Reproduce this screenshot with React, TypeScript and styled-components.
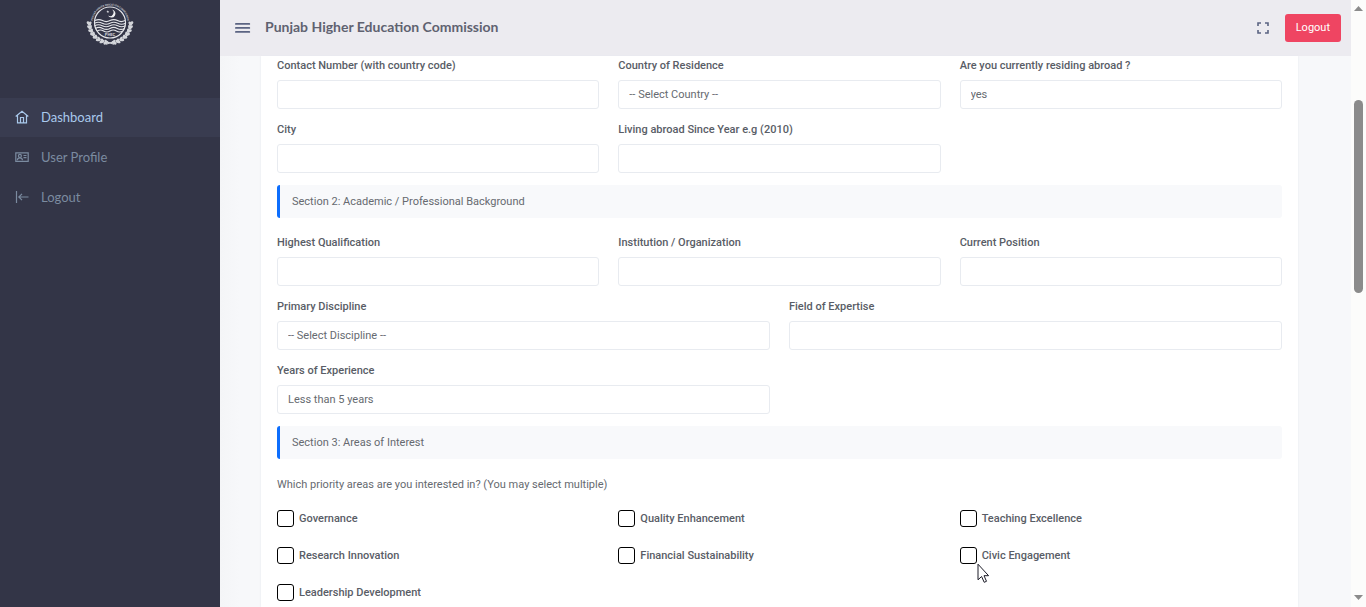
import React, { useId } from "react";
import styled, { createGlobalStyle, css } from "styled-components";

const GlobalStyle = createGlobalStyle`
  *, *::before, *::after { box-sizing: border-box; }
  body {
    margin: 0;
    background: #f7f8fa;
    color: #595d66;
    font-family: Roboto, "Liberation Sans", sans-serif;
    font-size: 11px;
    line-height: 16px;
  }
`;

const Shell = styled.div`
  display: flex;
  height: 100vh;
  overflow: hidden;
`;

const Sidebar = styled.aside`
  flex: 0 0 220px;
  background: #333547;
`;

const Brand = styled.a`
  display: flex;
  justify-content: center;
  height: 98px;
  padding-top: 1px;
`;

const Menu = styled.nav`
  display: flex;
  flex-direction: column;
  gap: 1px;
`;

const MenuLink = styled.a<{ $active?: boolean }>`
  display: flex;
  align-items: center;
  gap: 12px;
  height: 39px;
  padding: 0 15px 2px;
  font-family: Lato, sans-serif;
  font-size: 13px;
  text-decoration: none;
  color: ${(p) => (p.$active ? "#a9c9ec" : "#7b8ba0")};
  background: ${(p) => (p.$active ? "#393c50" : "transparent")};
`;

const Page = styled.div`
  display: flex;
  flex: 1;
  flex-direction: column;
  min-width: 0;
`;

const TopBar = styled.header`
  display: flex;
  flex: 0 0 56px;
  align-items: center;
  padding: 0 10px 0 14px;
  background: #ecebf0;
`;

const IconButton = styled.button`
  display: flex;
  padding: 0;
  border: 0;
  background: none;
  color: #5b6482;
`;

const Title = styled.h1`
  flex: 1;
  margin: 0 0 0 14px;
  padding-bottom: 2px;
  font-family: Lato, sans-serif;
  font-size: 14px;
  font-weight: 700;
  line-height: 20px;
  color: #5f6270;
`;

const LogoutButton = styled.button`
  height: 28px;
  margin-left: 15px;
  padding: 0 11px;
  border: 0;
  border-radius: 3px;
  background: #ef4562;
  color: #fff;
  font: 400 11px/16px Roboto, sans-serif;
`;

const Content = styled.main`
  display: flex;
  flex: 1;
  min-height: 0;
  padding: 0 53px 0 41px;
  background: linear-gradient(to right, #f4f5f7, #f7f8fa 20px);
`;

const Card = styled.form`
  flex: 1;
  padding: 2px 16px 0;
  background: #fff;
  box-shadow: 0 0 2px #e6e9ee;
  overflow: hidden;
`;

const Fields = styled.div`
  display: grid;
  grid-template-columns: repeat(6, 1fr);
  gap: 13px 19px;
`;

const Field = styled.div<{ $span: number }>`
  display: flex;
  flex-direction: column;
  gap: 6px;
  grid-column: span ${(p) => p.$span};
`;

const Label = styled.label`
  font-weight: 500;
`;

const control = css`
  width: 100%;
  height: 29px;
  padding: 0 10px;
  border: 1px solid #e8ebf0;
  border-radius: 3px;
  background: #fff;
  color: #666a70;
  font: 400 11px/16px Roboto, sans-serif;
`;

const TextInput = styled.input`
  ${control}
`;

const Select = styled.select`
  ${control}
  appearance: none;
`;

const SectionTitle = styled.h2`
  margin: 12px 0 17px;
  padding: 9px 12px 8px;
  border-left: 3px solid #0d6efd;
  border-radius: 3px;
  background: #f8f9fb;
  color: #666a70;
  font-size: 11px;
  font-weight: 400;
  line-height: 16px;
`;

const Areas = styled.fieldset`
  display: grid;
  grid-template-columns: repeat(3, 1fr);
  gap: 20px 19px;
  margin: 0;
  padding: 0;
  border: 0;
`;

const Question = styled.legend`
  margin-bottom: 17px;
  padding: 1px 0 0;
  color: #666a70;
`;

const Choice = styled.label`
  position: relative;
  display: flex;
  align-items: center;
  gap: 5px;
  font-weight: 500;
`;

const CheckBox = styled.input`
  appearance: none;
  width: 17px;
  height: 17px;
  margin: 0;
  border: 1px solid #000;
  border-radius: 3px;
  background: #fff;
`;

const Pointer = styled.svg`
  position: absolute;
  top: 16px;
  left: 17px;
`;

const ScrollTrack = styled.div`
  display: flex;
  flex: 0 0 15px;
  flex-direction: column;
  align-items: center;
  justify-content: space-between;
  padding: 6px 0 7px;
  background: #fcfcfb;
`;

const ScrollThumb = styled.div`
  width: 9px;
  height: 193px;
  margin-bottom: 213px;
  border-radius: 5px;
  background: #8b8b8b;
`;

const HomeIcon = () => (
  <svg width="14" height="14" viewBox="0 0 14 14" fill="none" stroke="currentColor" strokeWidth="1.2">
    <path d="M0.7 6.5 7 1.3l6.3 5.2M2.5 5.5v7.3h9V5.5M5.5 12.5v-5h3v5" />
  </svg>
);

const ProfileIcon = () => (
  <svg width="14" height="14" viewBox="0 0 14 14" fill="none" stroke="currentColor" strokeWidth="1.2">
    <path d="M0.8 2.8h12.4v8.6H0.8z" />
    <circle cx="4.9" cy="5.9" r="1.5" />
    <path d="M2.3 10.2c.2-1.6 1.2-2.3 2.6-2.3s2.4.7 2.6 2.3M8.5 5.5h3M8.5 7.7h3" />
  </svg>
);

const ExitIcon = () => (
  <svg width="14" height="14" viewBox="0 0 14 14" fill="none" stroke="currentColor" strokeWidth="1.2">
    <path d="M1.5 1v12M13.5 7H4M7 3.8 3.8 7 7 10.2" />
  </svg>
);

const leaves = [0, 1, 2, 3, 4, 5, 6, 7];

const Laurel = () => (
  <g fill="#d3d5da">
    {leaves.map((i) => {
      const turn = 98 + i * 11;
      const a = (turn * Math.PI) / 180;
      const x = 24 + 20.5 * Math.cos(a);
      const y = 22 + 19.5 * Math.sin(a);
      return (
        <g key={i} transform={`translate(${x} ${y}) rotate(${turn})`}>
          <ellipse cx="1.4" cy="0.4" rx="2.6" ry="1.5" transform="rotate(50)" />
          <ellipse cx="-1.2" cy="0.4" rx="2.2" ry="1.3" transform="rotate(-50)" />
        </g>
      );
    })}
  </g>
);

const Emblem = () => (
  <svg width="48" height="46" viewBox="0 0 48 46" role="img" aria-label="Commission emblem">
    <defs>
      <path id="emblem-arc" d="M8.1 28.9A17.4 17.4 0 1 1 39.9 28.9" />
    </defs>
    <text fill="#c9cbd2" fontFamily="Roboto, sans-serif" fontSize="2.5" fontWeight="700">
      <textPath href="#emblem-arc" startOffset="50%" textAnchor="middle">
        PUNJAB HIGHER EDUCATION COMMISSION
      </textPath>
    </text>
    <circle cx="24" cy="21.5" r="15.5" fill="none" stroke="#e4e5e9" strokeWidth="1.2" />
    <path d="M25.8 8.6a4 4 0 1 1-3.8 6 3.5 3.5 0 0 0 3.8-6z" fill="#f0f1f3" />
    <path d="M21.8 9.2l.4 1 1 .1-.8.6.3 1-.9-.6-.9.6.3-1-.8-.6 1-.1z" fill="#e4e5e9" />
    <g fill="none" stroke="#e4e5e9" strokeWidth="1.1">
      <path d="M9 19.6q3.8-2 7.5 0t7.5 0 7.5 0 7.5 0" />
      <path d="M8.5 22.2q3.9-2 7.8 0t7.7 0 7.7 0 7.8 0" />
      <path d="M8.6 24.8q3.9-2 7.7 0t7.7 0 7.7 0 7.7 0" />
      <path d="M9.4 27.4q3.6-2 7.3 0t7.3 0 7.3 0 7.3 0" />
      <path d="M11.2 30q3.2-2 6.4 0t6.4 0 6.4 0 6.4 0" />
    </g>
    <text x="24" y="34.6" fill="#d3d5da" fontFamily="Roboto, sans-serif" fontSize="4" fontWeight="700" textAnchor="middle">
      PHEC
    </text>
    <Laurel />
    <g transform="translate(48 0) scale(-1 1)">
      <Laurel />
    </g>
    <path d="M20 43.2l8-2.6M28 43.2l-8-2.6" stroke="#d3d5da" strokeWidth="1.2" />
  </svg>
);

const TextField = ({ label, span }: { label: string; span: number }) => {
  const id = useId();
  return (
    <Field $span={span}>
      <Label htmlFor={id}>{label}</Label>
      <TextInput id={id} type="text" />
    </Field>
  );
};

const SelectField = ({ label, span, options }: { label: string; span: number; options: string[] }) => {
  const id = useId();
  return (
    <Field $span={span}>
      <Label htmlFor={id}>{label}</Label>
      <Select id={id}>
        {options.map((o) => (
          <option key={o}>{o}</option>
        ))}
      </Select>
    </Field>
  );
};

const areas = [
  "Governance",
  "Quality Enhancement",
  "Teaching Excellence",
  "Research Innovation",
  "Financial Sustainability",
  "Civic Engagement",
  "Leadership Development",
];

export default function App() {
  return (
    <Shell>
      <GlobalStyle />
      <Sidebar>
        <Brand href="#">
          <Emblem />
        </Brand>
        <Menu>
          <MenuLink href="#" $active>
            <HomeIcon />
            Dashboard
          </MenuLink>
          <MenuLink href="#">
            <ProfileIcon />
            User Profile
          </MenuLink>
          <MenuLink href="#">
            <ExitIcon />
            Logout
          </MenuLink>
        </Menu>
      </Sidebar>
      <Page>
        <TopBar>
          <IconButton type="button" aria-label="Toggle menu">
            <svg width="17" height="12" viewBox="0 0 17 12" stroke="currentColor" strokeWidth="1.8" strokeLinecap="round">
              <path d="M1.9 1.9h13.4M1.9 5.9h13.4M1.9 9.9h13.4" />
            </svg>
          </IconButton>
          <Title>Punjab Higher Education Commission</Title>
          <IconButton type="button" aria-label="Full screen">
            <svg width="14" height="14" viewBox="0 0 14 14" fill="none" stroke="currentColor" strokeWidth="1.6">
              <path d="M2 5V2h3M9 2h3v3M12 9v3H9M5 12H2V9" />
            </svg>
          </IconButton>
          <LogoutButton type="button">Logout</LogoutButton>
        </TopBar>
        <Content>
          <Card>
            <Fields>
              <TextField span={2} label="Contact Number (with country code)" />
              <SelectField span={2} label="Country of Residence" options={["-- Select Country --"]} />
              <SelectField span={2} label="Are you currently residing abroad ?" options={["yes", "no"]} />
              <TextField span={2} label="City" />
              <TextField span={2} label="Living abroad Since Year e.g (2010)" />
            </Fields>
            <SectionTitle>Section 2: Academic / Professional Background</SectionTitle>
            <Fields>
              <TextField span={2} label="Highest Qualification" />
              <TextField span={2} label="Institution / Organization" />
              <TextField span={2} label="Current Position" />
              <SelectField span={3} label="Primary Discipline" options={["-- Select Discipline --"]} />
              <TextField span={3} label="Field of Expertise" />
              <SelectField span={3} label="Years of Experience" options={["Less than 5 years"]} />
            </Fields>
            <SectionTitle>Section 3: Areas of Interest</SectionTitle>
            <Areas>
              <Question>Which priority areas are you interested in? (You may select multiple)</Question>
              {areas.map((name) => (
                <Choice key={name}>
                  <CheckBox type="checkbox" />
                  {name}
                  {name === "Civic Engagement" && (
                    <Pointer width="13" height="21" viewBox="0 0 13 21" aria-hidden="true">
                      <path
                        d="M1 1.2v15.6l3.6-3.3 2.6 5.8 2.3-1-2.5-5.6h4.6z"
                        fill="#fff"
                        stroke="#1c1c28"
                      />
                    </Pointer>
                  )}
                </Choice>
              ))}
            </Areas>
          </Card>
        </Content>
      </Page>
      <ScrollTrack aria-hidden="true">
        <svg width="9" height="5" viewBox="0 0 9 5">
          <path d="M0 5 4.5 0 9 5z" fill="#8b8b8b" />
        </svg>
        <ScrollThumb />
        <svg width="9" height="5" viewBox="0 0 9 5">
          <path d="M0 0 4.5 5 9 0z" fill="#8b8b8b" />
        </svg>
      </ScrollTrack>
    </Shell>
  );
}
